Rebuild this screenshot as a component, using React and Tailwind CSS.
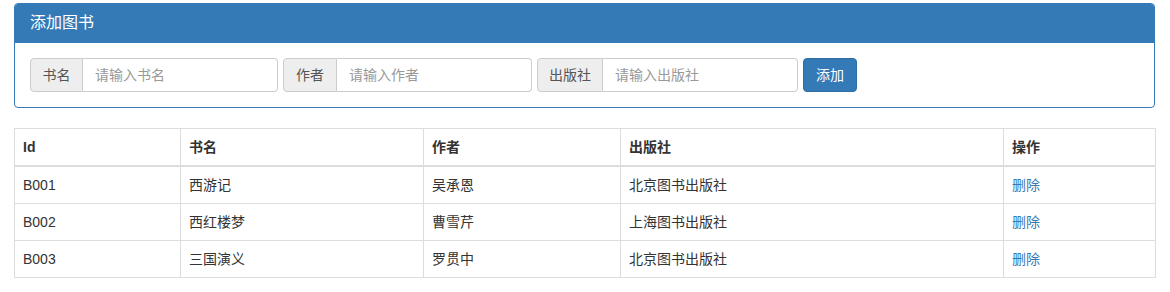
import React from "react";

const font = { fontFamily: '"Liberation Sans", "Noto Sans CJK SC", sans-serif' };

function Group({ label, placeholder, addonW }) {
  return (
    <div className="flex h-[34px]">
      <span className={`flex items-center justify-center ${addonW} h-full border border-[#ccc] rounded-l-[4px] bg-[#eee] text-[#555] text-[14px]`}>
        {label}
      </span>
      <input
        className="w-[195px] h-full border border-l-0 border-[#ccc] rounded-r-[4px] px-[12px] text-[14px] text-[#555] placeholder:text-[#999] outline-none bg-white"
        placeholder={placeholder}
        style={font}
      />
    </div>
  );
}

const rows = [
  ["B001", "西游记", "吴承恩", "北京图书出版社"],
  ["B002", "西红楼梦", "曹雪芹", "上海图书出版社"],
  ["B003", "三国演义", "罗贯中", "北京图书出版社"],
];

export default function App() {
  return (
    <div className="pt-[3px] pl-[14px] pr-[15px] text-[14px] text-[#333] bg-white" style={font}>
      <div className="w-[1141px] border border-[#337ab7] rounded-[4px]">
        <div className="bg-[#337ab7] text-white text-[16px] leading-[18px] pt-[10px] pb-[10px] px-[15px] border-b border-[#337ab7] rounded-t-[3px]">
          添加图书
        </div>
        <div className="p-[15px] flex gap-[5px]">
          <Group label="书名" placeholder="请输入书名" addonW="w-[53px]" />
          <Group label="作者" placeholder="请输入作者" addonW="w-[54px]" />
          <Group label="出版社" placeholder="请输入出版社" addonW="w-[66px]" />
          <button className="h-[34px] w-[54px] bg-[#337ab7] border border-[#2e6da4] rounded-[4px] text-white text-[14px]" style={font}>
            添加
          </button>
        </div>
      </div>
      <table className="mt-[20px] w-[1141px] border-collapse border border-[#ddd] table-fixed">
        <colgroup>
          <col className="w-[166px]" />
          <col className="w-[243px]" />
          <col className="w-[197px]" />
          <col className="w-[383px]" />
          <col className="w-[152px]" />
        </colgroup>
        <thead>
          <tr>
            {["Id", "书名", "作者", "出版社", "操作"].map((h) => (
              <th key={h} className="text-left font-bold p-[8px] leading-[20px] border border-[#ddd] border-b-2">
                {h}
              </th>
            ))}
          </tr>
        </thead>
        <tbody>
          {rows.map((r) => (
            <tr key={r[0]}>
              {r.map((c, i) => (
                <td key={i} className="p-[8px] leading-[20px] border border-[#ddd]">
                  {c}
                </td>
              ))}
              <td className="p-[8px] leading-[20px] border border-[#ddd] text-[#337ab7]">删除</td>
            </tr>
          ))}
        </tbody>
      </table>
    </div>
  );
}
